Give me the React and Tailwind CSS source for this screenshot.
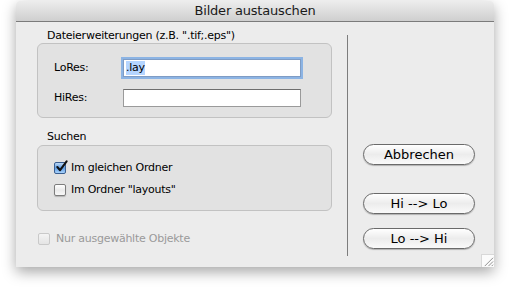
import { useState } from "react";

const font = { fontFamily: '"DejaVu Sans", "Liberation Sans", sans-serif' };

function AquaCheck({ checked, disabled, onChange }) {
  if (checked) {
    return (
      <span
        onClick={onChange}
        className="relative inline-block w-[12px] h-[12px] rounded-[2px] border border-[#3a5f91] bg-gradient-to-b from-[#bcd8f4] via-[#5d9ce3] to-[#a9d2fb] shrink-0"
      >
        <svg viewBox="0 0 14 14" className="absolute left-[0px] top-[-3px] w-[13px] h-[13px]">
          <path d="M2.5 7.5 L5.5 11 L12.5 1.5" fill="none" stroke="#111" strokeWidth="2.2" strokeLinecap="round" strokeLinejoin="round" />
        </svg>
      </span>
    );
  }
  return (
    <span
      onClick={onChange}
      className={
        disabled
          ? "inline-block w-[12px] h-[12px] rounded-[2px] border border-[#c9c9c9] bg-gradient-to-b from-[#f4f4f4] to-[#e4e4e4] shrink-0"
          : "inline-block w-[12px] h-[12px] rounded-[2px] border border-[#7d7d7d] bg-gradient-to-b from-[#ffffff] via-[#eaeaea] to-[#f8f8f8] shadow-[0_1px_1px_rgba(0,0,0,0.2)] shrink-0"
      }
    />
  );
}

function PillButton({ children, className = "" }) {
  return (
    <button
      className={
        "block w-[112px] h-[21px] rounded-full border border-[#6a6a6a] bg-gradient-to-b from-[#ffffff] via-[#ececec] to-[#fafafa] shadow-[0_1px_1px_rgba(0,0,0,0.25)] text-[13px] leading-[19px] text-black " +
        className
      }
    >
      {children}
    </button>
  );
}

export default function App() {
  const [sameFolder, setSameFolder] = useState(true);
  const [layoutsFolder, setLayoutsFolder] = useState(false);

  return (
    <div className="w-[510px] h-[290px] bg-white pt-[1px] pl-[16px]" style={font}>
      <div className="w-[478px] h-[266px] flex flex-col rounded-t-[5px] bg-[#ececec] shadow-[0_5px_14px_rgba(0,0,0,0.35)] overflow-hidden">
        {/* title bar */}
        <div className="h-[21px] shrink-0 flex items-center justify-center bg-gradient-to-b from-[#ededed] to-[#cfcfcf] border-b border-[#7b7b7b] text-[13px] tracking-[-0.2px] text-[#1a1a1a]">
          Bilder austauschen
        </div>

        <div className="flex flex-1 relative">
          {/* left column */}
          <div className="w-[310px] pl-[21px] pt-[7px] flex flex-col text-[11px] tracking-[-0.25px] text-black">
            <div className="pl-[10px] h-[14px] leading-[14px]">Dateierweiterungen (z.B. ".tif;.eps")</div>
            <div className="w-[295px] h-[75px] rounded-[6px] border border-[#c2c2c2] bg-[#e2e2e2] flex flex-col pt-[15px]">
              <div className="flex items-center h-[18px]">
                <span className="w-[85px] pl-[16px]">LoRes:</span>
                <div className="w-[178px] h-[18px] bg-white border border-[#7f9cc4] shadow-[0_0_0_2px_#8cb4e4] flex items-center pl-[2px]">
                  <span className="bg-[#b5d5ff] leading-[14px]">.lay</span>
                </div>
              </div>
              <div className="flex items-center h-[18px] mt-[12px]">
                <span className="w-[85px] pl-[16px]">HiRes:</span>
                <div className="w-[178px] h-[18px] bg-white border border-[#9a9a9a] border-t-[#6e6e6e]" />
              </div>
            </div>

            <div className="pl-[10px] h-[14px] leading-[14px] mt-[12px]">Suchen</div>
            <div className="mt-[1px] w-[295px] h-[66px] rounded-[6px] border border-[#c2c2c2] bg-[#e2e2e2] flex flex-col pt-[16px] pl-[16px] gap-[10px]">
              <label className="flex items-center gap-[5px] h-[12px]">
                <AquaCheck checked={sameFolder} onChange={() => setSameFolder(!sameFolder)} />
                <span>Im gleichen Ordner</span>
              </label>
              <label className="flex items-center gap-[5px] h-[12px]">
                <AquaCheck checked={layoutsFolder} onChange={() => setLayoutsFolder(!layoutsFolder)} />
                <span>Im Ordner "layouts"</span>
              </label>
            </div>

            <label className="flex items-center gap-[6px] h-[12px] mt-[22px] pl-[1px] text-[#9a9a9a]">
              <AquaCheck disabled />
              <span>Nur ausgewählte Objekte</span>
            </label>
          </div>

          {/* separator */}
          <div className="w-[1px] bg-[#7d7d7d] mt-[13px] mb-[11px] ml-[21px]" />

          {/* buttons */}
          <div className="pl-[15px] flex flex-col pt-[122px]">
            <PillButton>Abbrechen</PillButton>
            <PillButton className="mt-[28px]">Hi --&gt; Lo</PillButton>
            <PillButton className="mt-[14px]">Lo --&gt; Hi</PillButton>
          </div>

          {/* resize grip */}
          <div className="absolute right-0 bottom-0 w-[13px] h-[13px] bg-[#fbfbfb] border-l border-t border-[#d8d8d8]">
            <svg viewBox="0 0 13 13" className="w-[12px] h-[12px]">
              <path d="M12 3 L3 12 M12 7 L7 12 M12 10.5 L10.5 12" stroke="#8a8a8a" strokeWidth="1" />
            </svg>
          </div>
        </div>
      </div>
    </div>
  );
}
